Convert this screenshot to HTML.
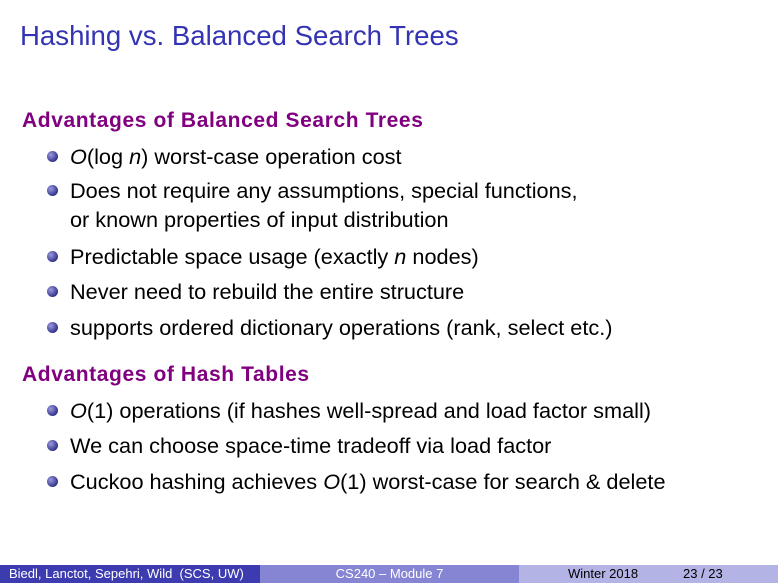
<!DOCTYPE html>
<html><head><style>
body{margin:0;width:778px;height:583px;background:#fff;position:relative;overflow:hidden;font-family:"Liberation Sans",sans-serif;}
.t{position:absolute;white-space:nowrap;line-height:1;}
.title{left:20px;top:22px;font-size:27.6px;color:#3333b3;}
.h{left:22px;font-size:21px;font-weight:bold;color:#800080;letter-spacing:0.6px;}
.b{left:70px;font-size:21.7px;color:#000;}
.d{position:absolute;left:47px;width:11px;height:11px;border-radius:50%;background:radial-gradient(circle at 35% 35%,#9a9ae0,#33338a 70%,#22226a);}
.f{position:absolute;top:565px;height:18px;font-size:13px;line-height:18px;}
</style></head><body>
<div class="t title">Hashing vs. Balanced Search Trees</div>
<div class="t h" style="top:110px">Advantages of Balanced Search Trees</div>
<div class="d" style="top:151px"></div><div class="t b" style="top:146px"><i>O</i>(log <i>n</i>) worst-case operation cost</div>
<div class="d" style="top:185px"></div><div class="t b" style="top:180px">Does not require any assumptions, special functions,</div>
<div class="t b" style="top:209px">or known properties of input distribution</div>
<div class="d" style="top:251px"></div><div class="t b" style="top:246px">Predictable space usage (exactly <i>n</i> nodes)</div>
<div class="d" style="top:286px"></div><div class="t b" style="top:281px">Never need to rebuild the entire structure</div>
<div class="d" style="top:322px"></div><div class="t b" style="top:317px">supports ordered dictionary operations (rank, select etc.)</div>
<div class="t h" style="top:364px">Advantages of Hash Tables</div>
<div class="d" style="top:405px"></div><div class="t b" style="top:400px"><i>O</i>(1) operations (if hashes well-spread and load factor small)</div>
<div class="d" style="top:440px"></div><div class="t b" style="top:435px">We can choose space-time tradeoff via load factor</div>
<div class="d" style="top:476px"></div><div class="t b" style="top:471px">Cuckoo hashing achieves <i>O</i>(1) worst-case for search &amp; delete</div>
<div class="f" style="left:0;width:260px;background:#3c3cb0;color:#fff;"><span style="padding-left:9px">Biedl, Lanctot, Sepehri, Wild&nbsp; (SCS, UW)</span></div>
<div class="f" style="left:260px;width:259px;background:#8585d4;color:#fff;text-align:center;">CS240 – Module 7</div>
<div class="f" style="left:519px;width:259px;background:#b3b3e6;color:#000;"><span style="position:absolute;left:49px">Winter 2018</span><span style="position:absolute;left:164px">23 / 23</span></div>
</body></html>
